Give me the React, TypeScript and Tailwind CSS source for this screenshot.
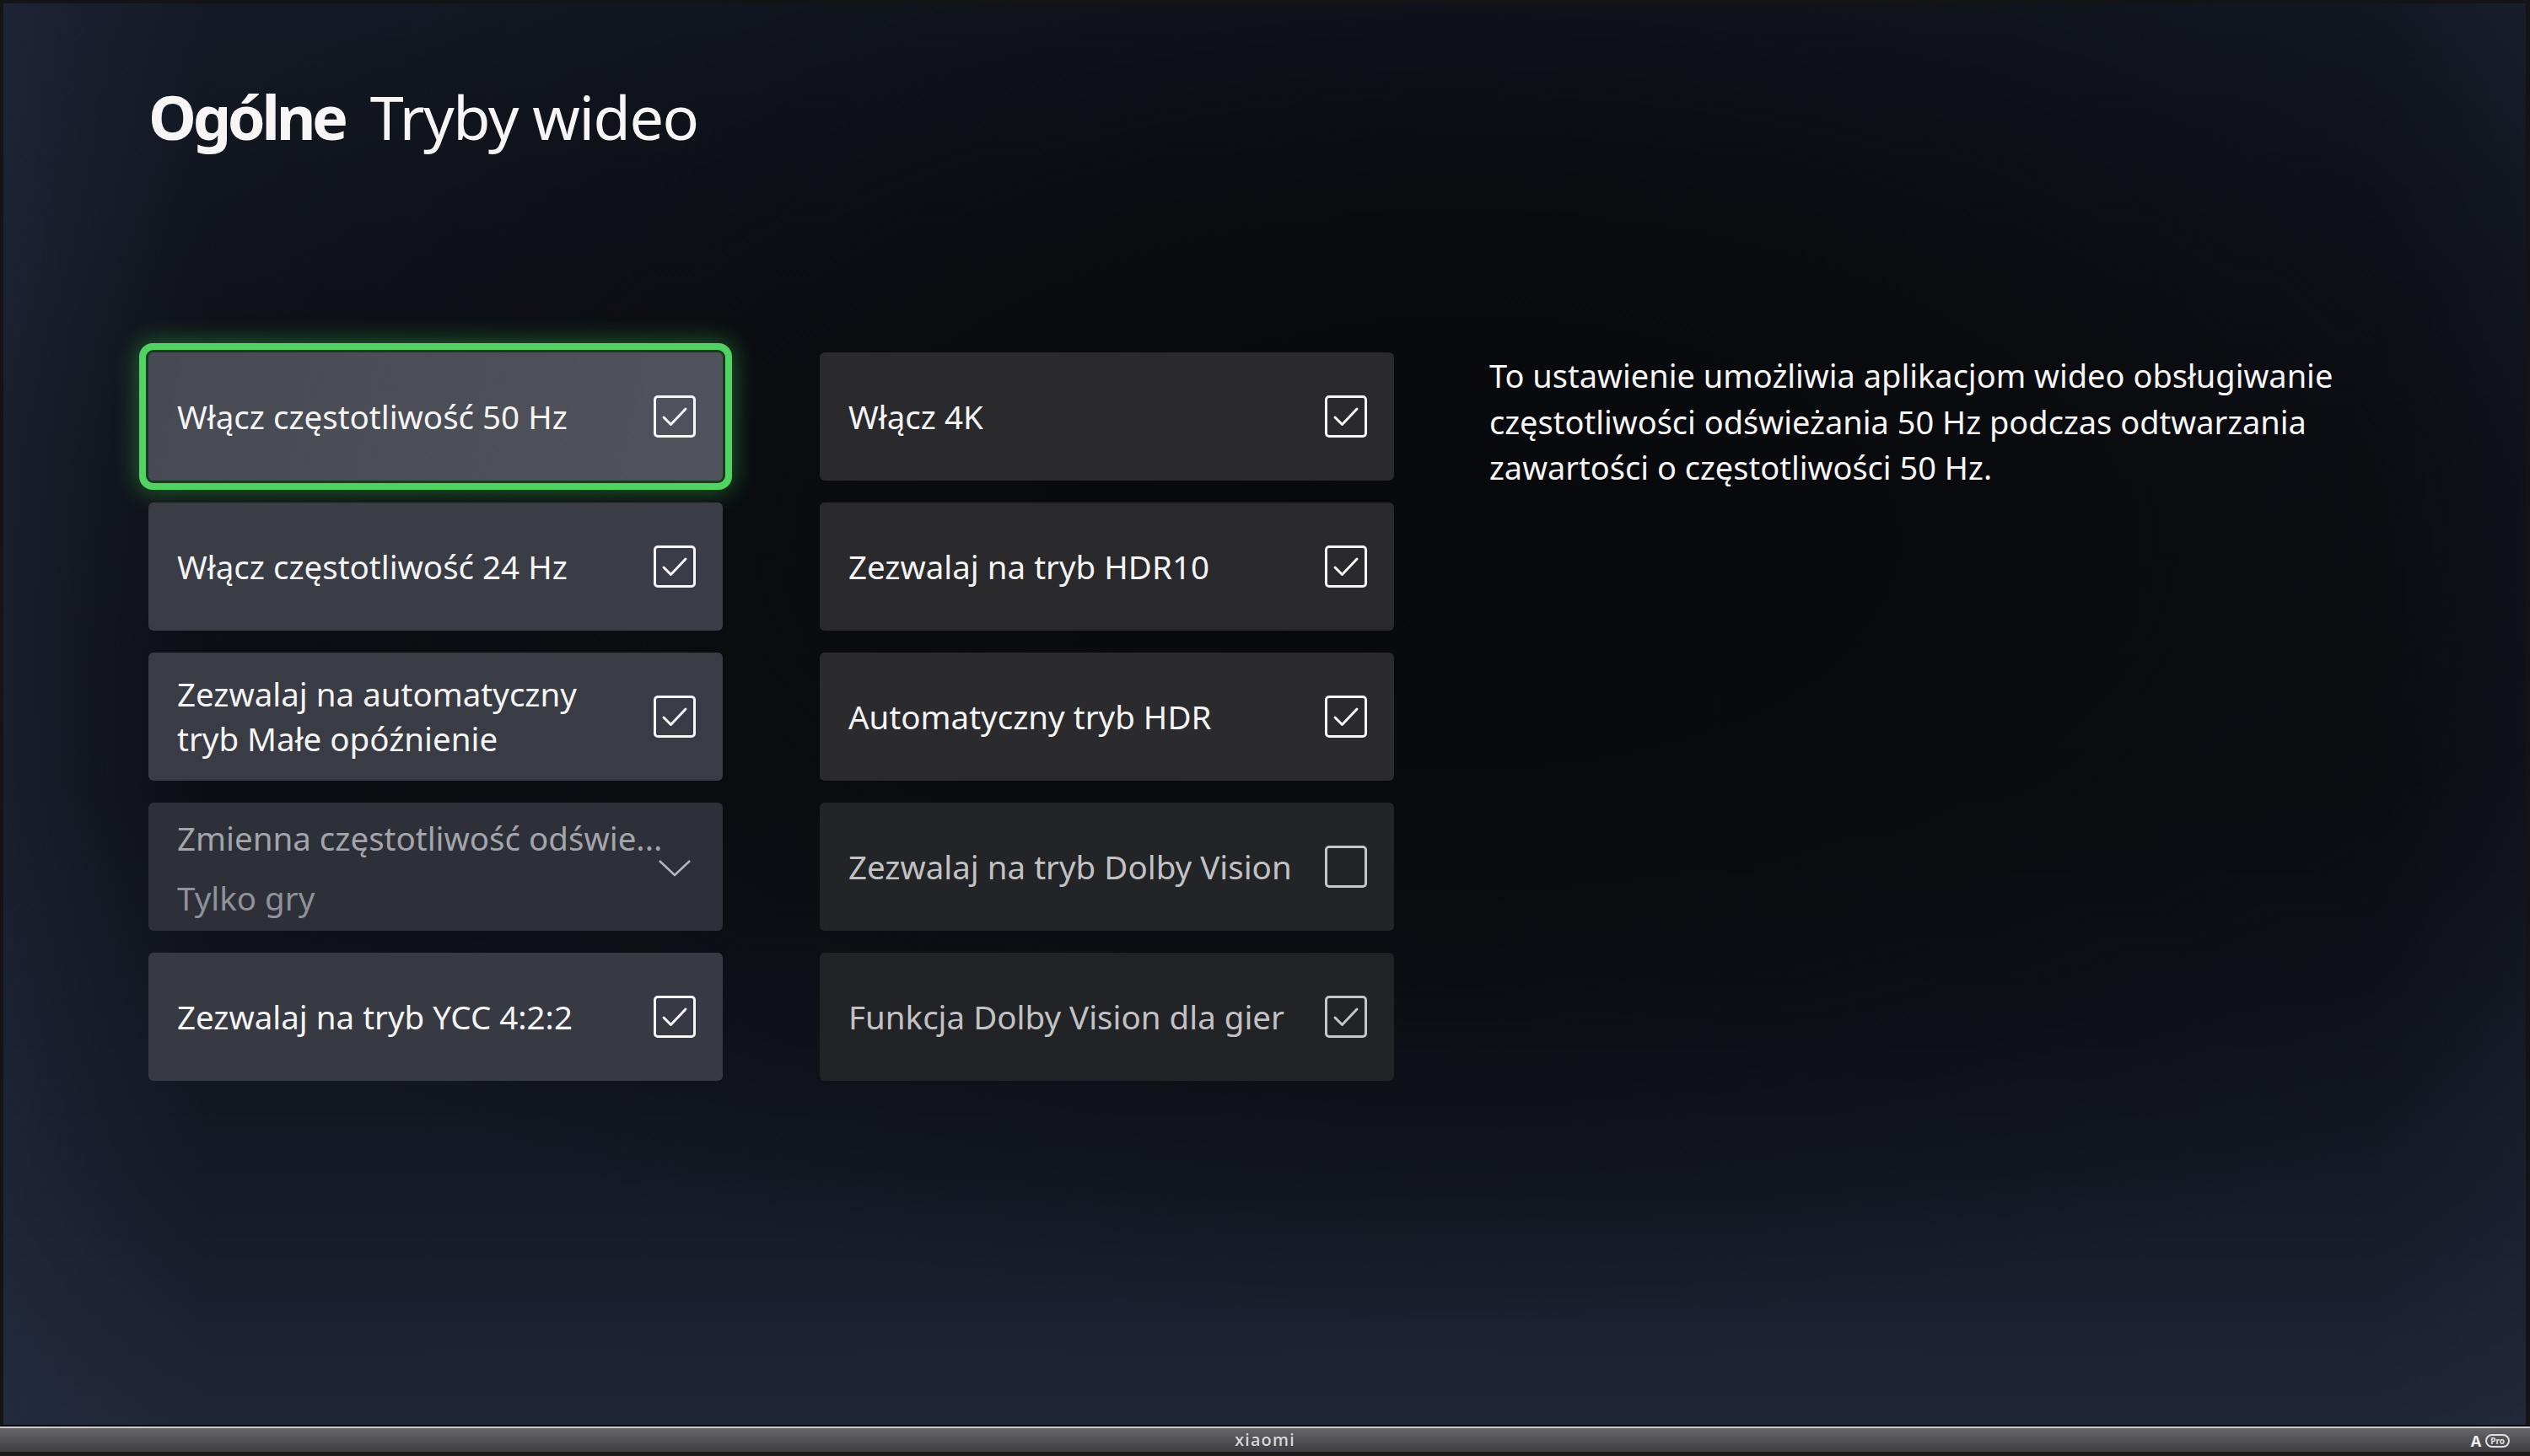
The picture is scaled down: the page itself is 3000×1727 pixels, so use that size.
import { Fragment } from 'react';

type Setting = {
  lines: string[];
  kind: 'check' | 'select';
  checked?: boolean;
  value?: string;
  dim?: boolean;
  focused?: boolean;
  tone: string;
};

const left: Setting[] = [
  { lines: ['Włącz częstotliwość 50 Hz'], kind: 'check', checked: true, focused: true, tone: 'bg-[linear-gradient(100deg,#474a52,#50535b)]' },
  { lines: ['Włącz częstotliwość 24 Hz'], kind: 'check', checked: true, tone: 'bg-[#3a3d45]' },
  { lines: ['Zezwalaj na automatyczny', 'tryb Małe opóźnienie'], kind: 'check', checked: true, tone: 'bg-[#393c44]' },
  { lines: ['Zmienna częstotliwość odświe...'], kind: 'select', value: 'Tylko gry', dim: true, tone: 'bg-[#2d3038]' },
  { lines: ['Zezwalaj na tryb YCC 4:2:2'], kind: 'check', checked: true, tone: 'bg-[#373a42]' },
];

const right: Setting[] = [
  { lines: ['Włącz 4K'], kind: 'check', checked: true, tone: 'bg-[#2a2a2d]' },
  { lines: ['Zezwalaj na tryb HDR10'], kind: 'check', checked: true, tone: 'bg-[#2a2a2d]' },
  { lines: ['Automatyczny tryb HDR'], kind: 'check', checked: true, tone: 'bg-[#2b2b2e]' },
  { lines: ['Zezwalaj na tryb Dolby Vision'], kind: 'check', checked: false, dim: true, tone: 'bg-[#232427]' },
  { lines: ['Funkcja Dolby Vision dla gier'], kind: 'check', checked: true, dim: true, tone: 'bg-[#222326]' },
];

function CheckBox({ checked, dim }: { checked?: boolean; dim?: boolean }) {
  const c = dim ? '#c6c6c8' : '#f6f6f6';
  return (
    <div
      className={`w-[50px] h-[50px] shrink-0 rounded-[5px] border-[3px] flex items-center justify-center ${
        dim ? 'border-[#c6c6c8]' : 'border-[#f6f6f6]'
      }`}
    >
      {checked && (
        <svg width="44" height="44" viewBox="0 0 44 44" fill="none">
          <polyline points="9,23 17.5,31.5 35,13" stroke={c} strokeWidth="3" strokeLinecap="round" strokeLinejoin="round" />
        </svg>
      )}
    </div>
  );
}

function Chevron() {
  return (
    <svg width="40" height="22" viewBox="0 0 40 22" fill="none" className="shrink-0 mx-[5px] mt-[4px]">
      <polyline points="2,2 20,19 38,2" stroke="#b4b5ba" strokeWidth="2.5" strokeLinejoin="round" />
    </svg>
  );
}

function Tile({ s, side }: { s: Setting; side: 'l' | 'r' }) {
  const text = !s.dim ? 'text-[#f4f4f4]' : side === 'l' ? 'text-[#a4a5aa]' : 'text-[#c2c2c5]';
  return (
    <div
      className={`h-[152px] rounded-[6px] pl-[34px] pr-[32px] flex items-center justify-between ${s.tone} ${
        s.focused
          ? 'shadow-[0_0_0_3px_#173b1f,0_0_0_11px_#52d263,0_0_28px_12px_rgba(60,210,80,0.45)]'
          : ''
      }`}
    >
      {s.kind === 'select' ? (
        <div className="flex-1 min-w-0 flex flex-col gap-[17px] pt-[2px] whitespace-nowrap">
          <span className={`leading-[54px] ${text}`}>{s.lines[0]}</span>
          <span className="leading-[54px] text-[#909298]">{s.value}</span>
        </div>
      ) : (
        <div className={`flex flex-col leading-[53px] whitespace-nowrap ${text}`}>
          {s.lines.map((l) => (
            <span key={l}>{l}</span>
          ))}
        </div>
      )}
      {s.kind === 'select' ? <Chevron /> : <CheckBox checked={s.checked} dim={s.dim} />}
    </div>
  );
}

export default function App() {
  return (
    <div className="w-[3000px] h-[1727px] flex flex-col bg-[#141414] overflow-hidden font-['Noto_Sans',sans-serif]">
      {/* panel */}
      <div className="flex-1 mt-[4px] ml-[4px] mr-[5px] bg-[radial-gradient(ellipse_60%_55%_at_58%_38%,#08090b_0%,#0a0b0f_40%,rgba(10,11,15,0)_100%),linear-gradient(90deg,rgba(38,47,70,0.5)_0%,rgba(38,47,70,0)_8%,rgba(38,47,70,0)_94%,rgba(38,47,70,0.25)_100%),linear-gradient(180deg,#141925_0%,#0f1218_30%,#0c0e13_55%,#141925_82%,#1f2637_100%)] pl-[172px] pt-[98px]">
        <h1 className="flex items-baseline gap-[30px] text-[72px] leading-none text-[#f7f5f5]">
          <span className="font-bold tracking-[-0.06em]">Ogólne</span>
          <span className="font-normal tracking-[-0.02em]">Tryby wideo</span>
        </h1>

        <div className="flex items-start mt-[244px]">
          <div className="grid grid-cols-[681px_681px] gap-x-[115px] gap-y-[26px] text-[38.5px]">
            {left.map((s, i) => (
              <Fragment key={i}>
                <Tile s={s} side="l" />
                <Tile s={right[i]} side="r" />
              </Fragment>
            ))}
          </div>

          <div className="ml-[113px] text-[38px] leading-[54.5px] text-[#f6f6f6]">
            <p>To ustawienie umożliwia aplikacjom wideo obsługiwanie</p>
            <p>częstotliwości odświeżania 50 Hz podczas odtwarzania</p>
            <p>zawartości o częstotliwości 50 Hz.</p>
          </div>
        </div>
      </div>

      {/* bottom bezel */}
      <div className="h-[2px] bg-[#0b0b0c]" />
      <div className="h-[2px] bg-[#c9c9cb]" />
      <div className="h-[28px] bg-[linear-gradient(180deg,#66666b,#4d4d52_60%,#3f3f43)] flex items-center justify-center relative">
        <span className="text-[20px] leading-none text-[#dcdcdc] font-medium tracking-[0.06em]">xiaomi</span>
        <div className="absolute right-[24px] top-[6px] flex items-center gap-[5px]">
          <span className="text-[18px] leading-none font-bold text-[#f0f0f0]">A</span>
          <span className="h-[16px] px-[4px] rounded-full border-[2px] border-[#e0e0e0] text-[10px] leading-none font-bold text-[#e0e0e0] flex items-center">
            Pro
          </span>
        </div>
      </div>
      <div className="h-[5px] bg-[#1a1a1b]" />
    </div>
  );
}
